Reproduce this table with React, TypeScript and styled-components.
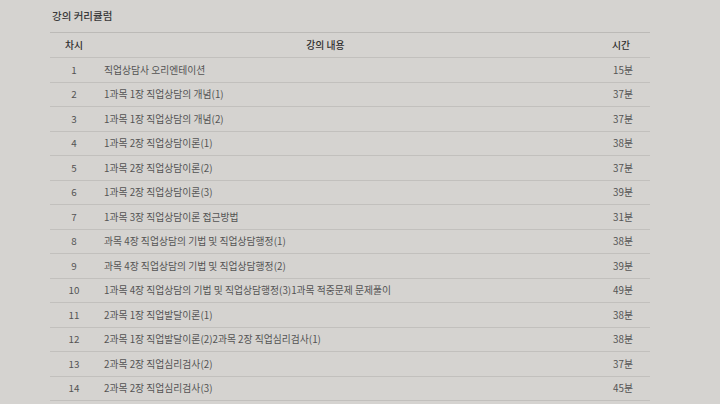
import React from "react"
import styled, {createGlobalStyle} from "styled-components"

interface lecture {
  no: number;
  title: string;
  time: string;
}

const lectures: lecture[] = [
  {no: 1, title: "직업상담사 오리엔테이션", time: "15분"},
  {no: 2, title: "1과목 1장 직업상담의 개념(1)", time: "37분"},
  {no: 3, title: "1과목 1장 직업상담의 개념(2)", time: "37분"},
  {no: 4, title: "1과목 2장 직업상담이론(1)", time: "38분"},
  {no: 5, title: "1과목 2장 직업상담이론(2)", time: "37분"},
  {no: 6, title: "1과목 2장 직업상담이론(3)", time: "39분"},
  {no: 7, title: "1과목 3장 직업상담이론 접근방법", time: "31분"},
  {no: 8, title: "과목 4장 직업상담의 기법 및 직업상담행정(1)", time: "38분"},
  {no: 9, title: "과목 4장 직업상담의 기법 및 직업상담행정(2)", time: "39분"},
  {no: 10, title: "1과목 4장 직업상담의 기법 및 직업상담행정(3)1과목 적중문제 문제풀이", time: "49분"},
  {no: 11, title: "2과목 1장 직업발달이론(1)", time: "38분"},
  {no: 12, title: "2과목 1장 직업발달이론(2)2과목 2장 직업심리검사(1)", time: "38분"},
  {no: 13, title: "2과목 2장 직업심리검사(2)", time: "37분"},
  {no: 14, title: "2과목 2장 직업심리검사(3)", time: "45분"},
]

const GlobalStyle = createGlobalStyle`
body {
  margin: 0;
  background: #d5d3d0;
  font-family: "Noto Sans CJK KR", "Noto Sans", sans-serif;
  color: #545454;
}
`

//Curriculum Container
const Container = styled.div`
width: 720px;
height: 404px;
overflow: hidden;
padding: 8px 0 0 50px;
box-sizing: border-box;
`

const Title = styled.h3`
margin: 0 0 0 2px;
font-size: 10.5px;
font-weight: 500;
color: #3a3a3a;
line-height: 16px;
height: 24px;
`

const Table = styled.table`
width: 600px;
border-collapse: collapse;
border-top: 1px solid #bcbab7;
font-size: 9.8px;
`

const HeadCell = styled.th<{align?: string}>`
height: 24px;
font-weight: 500;
color: #2f2f2f;
text-align: ${props => props.align || "center"};
border-bottom: 1px solid #c2c0bd;
padding: 0;
`

const Cell = styled.td`
height: 23.5px;
padding: 0;
border-bottom: 1px solid #c2c0bd;
white-space: nowrap;
`

const NoCell = styled(Cell)`
width: 48px;
text-align: center;
`

const TimeCell = styled(Cell)`
width: 80px;
text-align: right;
padding-right: 17px;
`

const TitleCell = styled(Cell)`
text-align: left;
padding-left: 6px;
`

const App = () => {
  return (
    <>
      <GlobalStyle />
      <Container>
        <Title>강의 커리큘럼</Title>
        <Table>
          <thead>
            <tr>
              <HeadCell style={{width: 48}}>차시</HeadCell>
              <HeadCell>강의 내용</HeadCell>
              <HeadCell align="right" style={{paddingRight: 20}}>시간</HeadCell>
            </tr>
          </thead>
          <tbody>
            {lectures.map(item => (
              <tr key={item.no}>
                <NoCell>{item.no}</NoCell>
                <TitleCell>{item.title}</TitleCell>
                <TimeCell>{item.time}</TimeCell>
              </tr>
            ))}
          </tbody>
        </Table>
      </Container>
    </>
  )
}

export default App;
